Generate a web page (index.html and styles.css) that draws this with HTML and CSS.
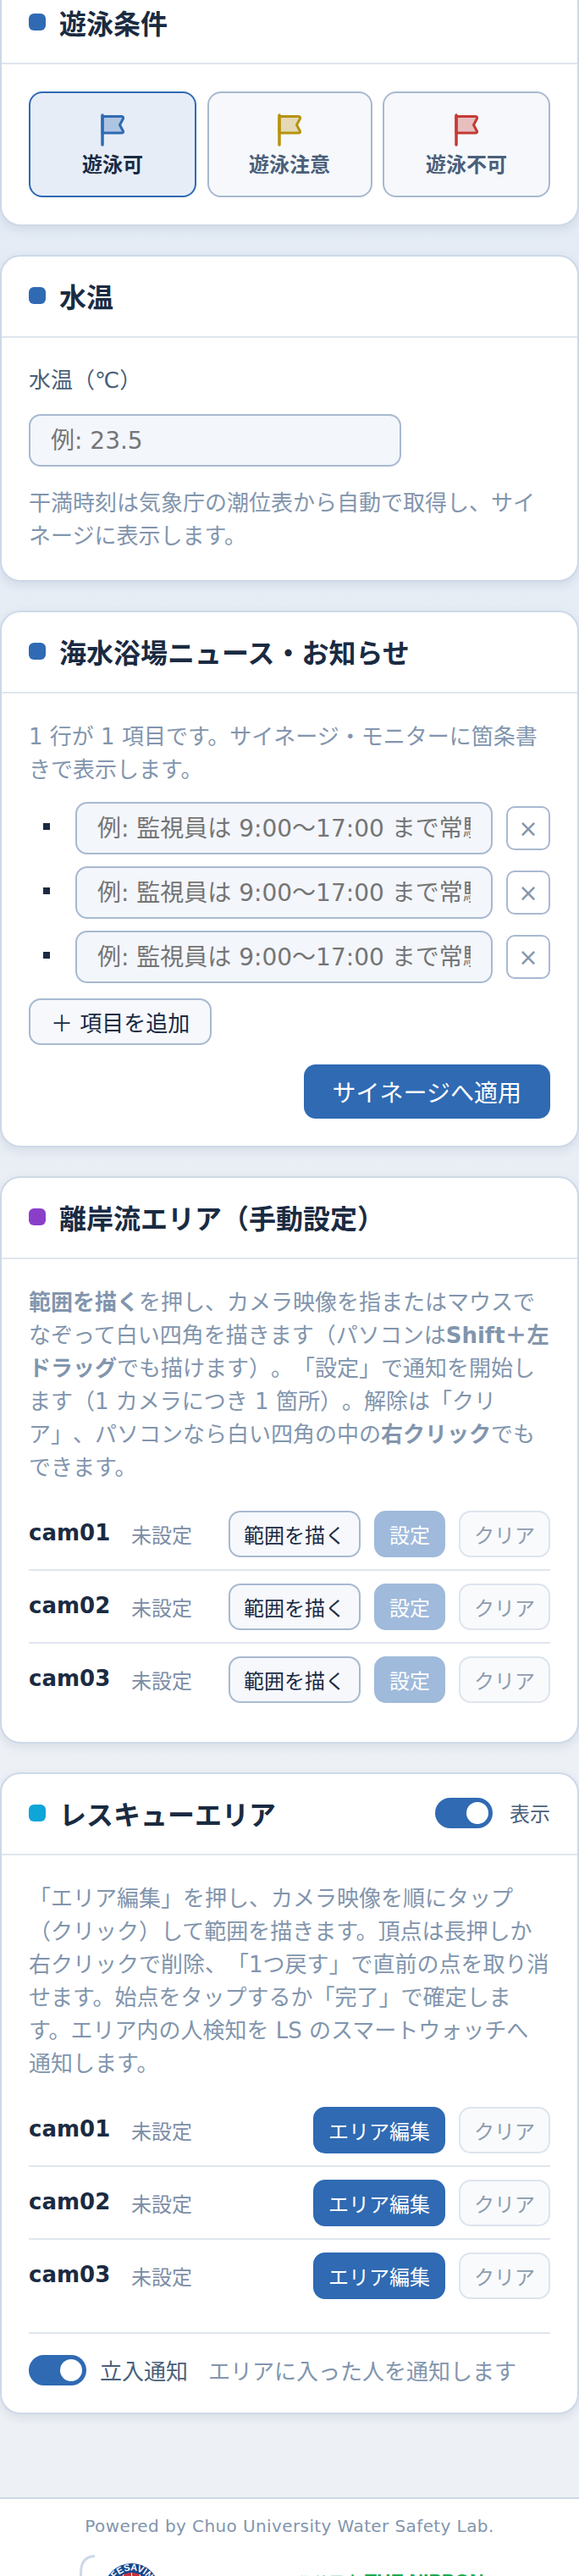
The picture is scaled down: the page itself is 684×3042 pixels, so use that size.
FILE: index.html
```html
<!DOCTYPE html>
<html lang="ja">
<head>
    <meta charset="UTF-8">
    <meta name="viewport" content="width=device-width, initial-scale=1.0">
    <title>管理パネル</title>
    <link rel="stylesheet" href="styles.css">
</head>
<body>
    <main class="page">
        <section class="card card-first">
            <div class="card-header">
                <h2 class="card-title"><span class="dot"></span>遊泳条件</h2>
            </div>
            <div class="card-body">
                <div class="cond-grid">
                    <button class="cond-btn active">
                        <svg class="flag flag-blue" viewBox="0 0 28 39"><path class="flag-cloth" d="M2 3.5H24.5Q27 3.5 26.5 6L22.5 13.5L26.5 21Q27 23 24.5 23H2Z"/><path class="flag-pole" d="M2 2V37"/></svg>
                        遊泳可
                    </button>
                    <button class="cond-btn">
                        <svg class="flag flag-yellow" viewBox="0 0 28 39"><path class="flag-cloth" d="M2 3.5H24.5Q27 3.5 26.5 6L22.5 13.5L26.5 21Q27 23 24.5 23H2Z"/><path class="flag-pole" d="M2 2V37"/></svg>
                        遊泳注意
                    </button>
                    <button class="cond-btn">
                        <svg class="flag flag-red" viewBox="0 0 28 39"><path class="flag-cloth" d="M2 3.5H24.5Q27 3.5 26.5 6L22.5 13.5L26.5 21Q27 23 24.5 23H2Z"/><path class="flag-pole" d="M2 2V37"/></svg>
                        遊泳不可
                    </button>
                </div>
            </div>
        </section>

        <section class="card">
            <div class="card-header">
                <h2 class="card-title"><span class="dot"></span>水温</h2>
            </div>
            <div class="card-body">
                <label class="field-label" for="waterTemp">水温（℃）</label>
                <input class="text-input temp-input" id="waterTemp" type="text" placeholder="例: 23.5">
                <p class="hint temp-hint">干満時刻は気象庁の潮位表から自動で取得し、サイネージに表示します。</p>
            </div>
        </section>

        <section class="card">
            <div class="card-header">
                <h2 class="card-title"><span class="dot"></span>海水浴場ニュース・お知らせ</h2>
            </div>
            <div class="card-body">
                <p class="hint">1 行が 1 項目です。サイネージ・モニターに箇条書きで表示します。</p>
                <div class="news-list">
                    <div class="news-item">
                        <span class="bullet"></span>
                        <input class="text-input" type="text" placeholder="例: 監視員は 9:00〜17:00 まで常駐しています">
                        <button class="remove-btn">×</button>
                    </div>
                    <div class="news-item">
                        <span class="bullet"></span>
                        <input class="text-input" type="text" placeholder="例: 監視員は 9:00〜17:00 まで常駐しています">
                        <button class="remove-btn">×</button>
                    </div>
                    <div class="news-item">
                        <span class="bullet"></span>
                        <input class="text-input" type="text" placeholder="例: 監視員は 9:00〜17:00 まで常駐しています">
                        <button class="remove-btn">×</button>
                    </div>
                </div>
                <button class="add-btn">＋ 項目を追加</button>
                <div class="apply-row">
                    <button class="apply-btn">サイネージへ適用</button>
                </div>
            </div>
        </section>

        <section class="card">
            <div class="card-header">
                <h2 class="card-title"><span class="dot dot-purple"></span>離岸流エリア（手動設定）</h2>
            </div>
            <div class="card-body">
                <p class="hint"><strong>範囲を描く</strong>を押し、カメラ映像を指またはマウスでなぞって白い四角を描きます（パソコンは<strong>Shift＋左ドラッグ</strong>でも描けます）。「設定」で通知を開始します（1 カメラにつき 1 箇所）。解除は「クリア」、パソコンなら白い四角の中の<strong>右クリック</strong>でもできます。</p>
                <div class="cam-list">
                    <div class="cam-row">
                        <span class="cam-name">cam01</span>
                        <span class="cam-status">未設定</span>
                        <div class="cam-actions">
                            <button class="btn btn-outline">範囲を描く</button>
                            <button class="btn btn-muted">設定</button>
                            <button class="btn btn-clear">クリア</button>
                        </div>
                    </div>
                    <div class="cam-row">
                        <span class="cam-name">cam02</span>
                        <span class="cam-status">未設定</span>
                        <div class="cam-actions">
                            <button class="btn btn-outline">範囲を描く</button>
                            <button class="btn btn-muted">設定</button>
                            <button class="btn btn-clear">クリア</button>
                        </div>
                    </div>
                    <div class="cam-row">
                        <span class="cam-name">cam03</span>
                        <span class="cam-status">未設定</span>
                        <div class="cam-actions">
                            <button class="btn btn-outline">範囲を描く</button>
                            <button class="btn btn-muted">設定</button>
                            <button class="btn btn-clear">クリア</button>
                        </div>
                    </div>
                </div>
            </div>
        </section>

        <section class="card">
            <div class="card-header header-split">
                <h2 class="card-title"><span class="dot dot-cyan"></span>レスキューエリア</h2>
                <div class="toggle-wrap">
                    <span class="toggle"></span>
                    <span class="toggle-text">表示</span>
                </div>
            </div>
            <div class="card-body">
                <p class="hint">「エリア編集」を押し、カメラ映像を順にタップ（クリック）して範囲を描きます。頂点は長押しか右クリックで削除、「1つ戻す」で直前の点を取り消せます。始点をタップするか「完了」で確定します。エリア内の人検知を LS のスマートウォッチへ通知します。</p>
                <div class="cam-list">
                    <div class="cam-row">
                        <span class="cam-name">cam01</span>
                        <span class="cam-status">未設定</span>
                        <div class="cam-actions">
                            <button class="btn btn-primary">エリア編集</button>
                            <button class="btn btn-clear">クリア</button>
                        </div>
                    </div>
                    <div class="cam-row">
                        <span class="cam-name">cam02</span>
                        <span class="cam-status">未設定</span>
                        <div class="cam-actions">
                            <button class="btn btn-primary">エリア編集</button>
                            <button class="btn btn-clear">クリア</button>
                        </div>
                    </div>
                    <div class="cam-row">
                        <span class="cam-name">cam03</span>
                        <span class="cam-status">未設定</span>
                        <div class="cam-actions">
                            <button class="btn btn-primary">エリア編集</button>
                            <button class="btn btn-clear">クリア</button>
                        </div>
                    </div>
                </div>
                <div class="notify-row">
                    <span class="toggle"></span>
                    <span class="notify-label">立入通知</span>
                    <span class="notify-text">エリアに入った人を通知します</span>
                </div>
            </div>
        </section>
    </main>

    <footer class="site-footer">
        <p class="powered">Powered by Chuo University Water Safety Lab.</p>
        <svg class="partner-logos" viewBox="0 0 500 30" width="500" height="30">
            <path class="logo-edge" d="M20 1.5Q3.5 2 3.5 22V30"/>
            <circle class="badge-ring" cx="63.5" cy="43" r="33"/>
            <circle class="badge-globe" cx="63.5" cy="43" r="22"/>
            <path class="badge-lines" d="M48 27H79M44 33H83M63.5 21V40M54 23Q51 30 52 40M73 23Q76 30 75 40"/>
            <path id="badgeArc" fill="none" d="M39 43A24.5 24.5 0 0 1 88 43"/>
            <text class="badge-text"><textPath href="#badgeArc" startOffset="50%" text-anchor="middle">LIFESAVING</textPath></text>
            <text class="green-small" x="260" y="36">公益</text>
            <text class="green-jp" x="296" y="40">日本</text>
            <text class="green-en" x="339" y="40">THE NIPPON</text>
        </svg>
    </footer>
</body>
</html>
```

FILE: styles.css
```css
* {
    box-sizing: border-box;
}

html, body {
    margin: 0;
    height: 100vh;
    overflow: hidden;
}

body {
    display: flex;
    flex-direction: column;
    font-family: "DejaVu Sans", "Noto Sans CJK JP", sans-serif;
    color: #1a2b42;
    background: linear-gradient(180deg, #e3ebf5 0%, #edf0f5 70%);
    text-spacing-trim: space-all;
}

button, input {
    font-family: inherit;
}

.page {
    display: flex;
    flex-direction: column;
    gap: 34px;
    padding-bottom: 98px;
}

.card {
    background: #fff;
    border: 2px solid #cdd9e7;
    border-radius: 24px;
    box-shadow: 0 4px 12px rgba(30, 60, 110, 0.1);
}

.card-first {
    margin-top: -22px;
}

.card-header {
    display: flex;
    align-items: center;
    height: 96px;
    padding: 0 32px 3px;
    border-bottom: 2px solid #e0e6ef;
}

.header-split {
    justify-content: space-between;
}

.card-title {
    display: flex;
    align-items: center;
    gap: 16px;
    margin: 0;
    font-size: 32px;
    font-weight: 700;
}

.dot {
    width: 20px;
    height: 20px;
    border-radius: 6px;
    background: #2f6ab3;
}

.dot-purple {
    background: #8b3fc9;
}

.dot-cyan {
    background: #0ea5d9;
}

.card-body {
    padding: 32px;
}

/* swim condition */
.cond-grid {
    display: grid;
    grid-template-columns: 198px 195px 198px;
    justify-content: space-between;
}

.cond-btn {
    display: flex;
    flex-direction: column;
    align-items: center;
    gap: 7px;
    height: 125px;
    padding: 24px 0 0;
    background: #f6f8fb;
    border: 2px solid #a8b9d0;
    border-radius: 16px;
    font-size: 24px;
    line-height: 30px;
    font-weight: 700;
    color: #4a5f7a;
}

.cond-btn.active {
    background: #e6edf7;
    border-color: #2f6ab3;
    color: #1a2b42;
}

.flag {
    width: 28px;
    height: 39px;
}

.flag-cloth {
    fill-opacity: 0.3;
    stroke-width: 3;
    stroke-linejoin: round;
}

.flag-pole {
    fill: none;
    stroke-width: 3.5;
    stroke-linecap: round;
}

.flag-blue path {
    stroke: #2f6ab3;
}

.flag-blue .flag-cloth {
    fill: #2f6ab3;
}

.flag-yellow path {
    stroke: #b7920f;
}

.flag-yellow .flag-cloth {
    fill: #b7920f;
}

.flag-red path {
    stroke: #c53a35;
}

.flag-red .flag-cloth {
    fill: #c53a35;
}

/* forms */
.field-label {
    display: block;
    margin-bottom: 22px;
    font-size: 26px;
    line-height: 36px;
    color: #4a5f7a;
}

.text-input {
    flex: 1;
    min-width: 0;
    height: 62px;
    padding: 0 24px;
    background: #f3f6fb;
    border: 2px solid #a8b9d0;
    border-radius: 14px;
    font-size: 28px;
    color: #1a2b42;
}

.temp-input {
    display: block;
    width: 440px;
}

.hint {
    margin: 0;
    font-size: 26px;
    line-height: 39px;
    color: #8295ad;
}

.temp-hint {
    margin-top: 24px;
}

/* news */
.news-list {
    display: flex;
    flex-direction: column;
    gap: 14px;
    margin-top: 18px;
}

.news-item {
    display: flex;
    align-items: center;
}

.bullet {
    width: 8px;
    height: 8px;
    margin: 0 30px 4px 17px;
    background: #1a2b42;
}

.remove-btn {
    width: 52px;
    height: 52px;
    margin-left: 16px;
    padding: 0;
    background: #fff;
    border: 2px solid #a8b9d0;
    border-radius: 10px;
    font-size: 28px;
    color: #8496ad;
}

.add-btn {
    display: block;
    height: 55px;
    margin-top: 18px;
    padding: 0 24px;
    background: #f6f8fc;
    border: 2px solid #a8b9d0;
    border-radius: 14px;
    font-size: 26px;
    color: #1a2b42;
}

.apply-row {
    display: flex;
    justify-content: flex-end;
    margin-top: 23px;
}

.apply-btn {
    height: 64px;
    padding: 0 34px;
    background: #2f6ab3;
    border: none;
    border-radius: 14px;
    font-size: 28px;
    color: #fff;
}

/* camera rows */
.cam-list {
    margin-top: 16px;
}

.cam-row {
    display: flex;
    align-items: center;
    padding: 15px 0 14px;
    border-bottom: 2px solid #e0e6ef;
}

.cam-row:last-child {
    border-bottom: none;
}

.cam-name {
    width: 121px;
    margin-bottom: 4px;
    font-size: 26px;
    font-weight: 700;
}

.cam-status {
    font-size: 24px;
    color: #7c8da5;
}

.cam-actions {
    display: flex;
    gap: 16px;
    margin-left: auto;
}

.btn {
    height: 55px;
    padding: 0 16px;
    border: 2px solid transparent;
    border-radius: 14px;
    font-size: 24px;
}

.btn-outline {
    background: #f6f8fc;
    border-color: #a8b9d0;
    color: #1a2b42;
}

.btn-muted {
    background: #9fbadb;
    border-color: #9fbadb;
    color: #fff;
}

.btn-primary {
    background: #2f6ab3;
    border-color: #2f6ab3;
    color: #fff;
}

.btn-clear {
    background: #f9fafc;
    border-color: #dde4ee;
    color: #8d9cb0;
}

/* toggles */
.toggle-wrap {
    display: flex;
    align-items: center;
    gap: 20px;
}

.toggle {
    position: relative;
    flex: none;
    width: 68px;
    height: 36px;
    border-radius: 18px;
    background: #2f6ab3;
}

.toggle::after {
    content: "";
    position: absolute;
    top: 5px;
    right: 5px;
    width: 26px;
    height: 26px;
    border-radius: 50%;
    background: #fff;
}

.toggle-text {
    font-size: 24px;
    color: #4a5f7a;
}

.notify-row {
    display: flex;
    align-items: center;
    margin-top: 25px;
    padding-top: 24px;
    border-top: 2px solid #e0e6ef;
}

.notify-label {
    margin-left: 16px;
    font-size: 26px;
    color: #4a5f7a;
}

.notify-text {
    margin-left: 24px;
    font-size: 26px;
    color: #8295ad;
}

/* footer */
.site-footer {
    flex: 1;
    display: flex;
    flex-direction: column;
    align-items: center;
    background: #fff;
    border-top: 2px solid #cdd9e7;
}

.powered {
    margin: 16px 0 18px;
    font-size: 20px;
    letter-spacing: 0.4px;
    line-height: 32px;
    color: #8295ad;
}

.partner-logos {
    flex: none;
    font-family: "Liberation Sans", "Noto Sans CJK JP", sans-serif;
}

.logo-edge {
    fill: none;
    stroke: #cdd9e7;
    stroke-width: 3;
}

.badge-ring {
    fill: #15468c;
}

.badge-globe {
    fill: #c8323c;
}

.badge-lines {
    fill: none;
    stroke: #fff;
    stroke-width: 1;
}

.badge-text {
    font-size: 11px;
    font-weight: 700;
    fill: #fff;
}

.green-small {
    font-size: 14px;
    letter-spacing: 6px;
    fill: #1da84f;
}

.green-jp {
    font-size: 19px;
    font-weight: 700;
    fill: #1da84f;
}

.green-en {
    font-size: 23px;
    font-weight: 700;
    fill: #1da84f;
}
```
